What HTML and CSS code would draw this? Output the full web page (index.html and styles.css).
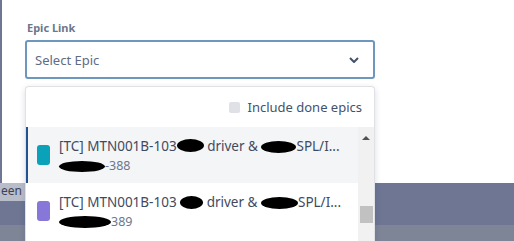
FILE: index.html
```html
<!DOCTYPE html>
<html lang="en">
<head>
  <meta charset="UTF-8" />
  <title>Epic Link</title>
  <link rel="stylesheet" href="styles.css">
</head>
<body>

  <div class="modal">
    <div class="field">
      <label class="field-label" for="epic">Epic Link</label>
      <div class="select" id="epic">
        <span class="placeholder">Select Epic</span>
        <svg class="chevron" width="10" height="6" viewBox="0 0 10 6">
          <path d="M1 1 L5 5 L9 1" fill="none" stroke="#42526e" stroke-width="2" />
        </svg>
      </div>
    </div>
  </div>

  <div class="below">
    <div class="below-top">
      <span class="peek">een</span>
    </div>
    <div class="below-bottom"></div>
  </div>

  <!-- open epic dropdown -->
  <div class="dropdown">
    <div class="dropdown-head">
      <span class="check"></span>
      <span>Include done epics</span>
    </div>
    <div class="dropdown-list">
      <div class="items">
        <div class="item active">
          <span class="swatch teal"></span>
          <div class="item-text">
            <div class="item-title">[TC] MTN001B-103<span class="blot b1"></span> driver &amp; <span class="blot b2"></span>SPL/I...</div>
            <div class="item-key"><span class="blot b3"></span>-388</div>
          </div>
        </div>
        <div class="item">
          <span class="swatch purple"></span>
          <div class="item-text">
            <div class="item-title">[TC] MTN001B-103 <span class="blot b4"></span> driver &amp; <span class="blot b5"></span>SPL/I...</div>
            <div class="item-key"><span class="blot b6"></span>389</div>
          </div>
        </div>
      </div>
      <div class="scrollbar">
        <span class="arrow-up"></span>
        <span class="thumb"></span>
      </div>
    </div>
  </div>

</body>
</html>
```

FILE: styles.css
```css
body {
  margin: 0;
  width: 514px;
  height: 241px;
  overflow: hidden;
  background-color: #6e7694;
  font-family: "Noto Sans", "Open Sans", sans-serif;
  color: #42526e;
}
.modal {
  margin-left: 2px;
  height: 183px;
  background-color: #fff;
  padding: 20px 0 0 23px;
  box-sizing: border-box;
}
.field-label {
  display: block;
  font-size: 11px;
  font-weight: bold;
  color: #6b778c;
  margin-left: 2px;
  line-height: 16px;
}
.select {
  margin-top: 4px;
  width: 350px;
  height: 39px;
  box-sizing: border-box;
  border: 2px solid #6d97bd;
  border-radius: 3px;
  display: flex;
  align-items: center;
  justify-content: space-between;
  padding: 0 14px 0 8px;
}
.placeholder {
  font-size: 13px;
  color: #5e6c84;
}

.below {
  height: 58px;
  display: flex;
  flex-direction: column;
}
.below-top {
  height: 42px;
}
.peek {
  display: block;
  width: 25px;
  height: 18px;
  background-color: #b9bdca;
  color: #3d4354;
  font-size: 12px;
  line-height: 16px;
  padding-left: 1px;
  box-sizing: border-box;
}
.below-bottom {
  flex: 1;
  background-color: #7e8597;
}

/* Epic dropdown */
.dropdown {
  position: absolute;
  top: 86px;
  left: 25px;
  width: 350px;
  height: 155px;
  box-sizing: border-box;
  background-color: #fff;
  border: 1px solid #dfe1e6;
  border-bottom: none;
  border-radius: 4px 4px 0 0;
  box-shadow: 0 2px 6px rgba(9, 30, 66, 0.15);
  overflow: hidden;
}
.dropdown-head {
  height: 40px;
  display: flex;
  align-items: center;
  justify-content: flex-end;
  gap: 7px;
  padding-right: 12px;
  font-size: 13px;
  color: #42526e;
}
.check {
  width: 11px;
  height: 11px;
  border-radius: 2px;
  background-color: #dfe1e6;
}
.dropdown-list {
  display: flex;
}
.items {
  flex: 1;
}
.item {
  height: 56px;
  display: flex;
  align-items: center;
  gap: 9px;
  padding-left: 11px;
  background-color: #fff;
}
.item.active {
  background-color: #f4f5f7;
  box-shadow: inset 2px 0 #24518f;
}
.swatch {
  width: 13px;
  height: 20px;
  border-radius: 3px;
  flex-shrink: 0;
}
.swatch.teal {
  background-color: #0aa2b8;
}
.swatch.purple {
  background-color: #8777d9;
}
.item-text {
  white-space: nowrap;
  padding-top: 1px;
}
.item-title {
  font-size: 13.5px;
  line-height: 20px;
  color: #3f4a5e;
}
.item-key {
  font-size: 12.5px;
  line-height: 20px;
  color: #6b778c;
}
.blot {
  display: inline-block;
  background-color: #000;
  border-radius: 50%;
  vertical-align: middle;
}
.b1 { width: 27px; height: 13px; margin-top: -3px; }
.b2 { width: 35px; height: 12px; }
.b3 { width: 46px; height: 11px; }
.b4 { width: 23px; height: 13px; }
.b5 { width: 37px; height: 12px; }
.b6 { width: 52px; height: 12px; }

.scrollbar {
  width: 16px;
  height: 130px;
  background-color: #f1f1f1;
  position: relative;
}
.arrow-up {
  position: absolute;
  top: 9px;
  left: 4px;
  border-left: 4px solid transparent;
  border-right: 4px solid transparent;
  border-bottom: 4px solid #505050;
}
.thumb {
  position: absolute;
  top: 79px;
  left: 2px;
  width: 13px;
  height: 17px;
  background-color: #c1c1c1;
}
```
